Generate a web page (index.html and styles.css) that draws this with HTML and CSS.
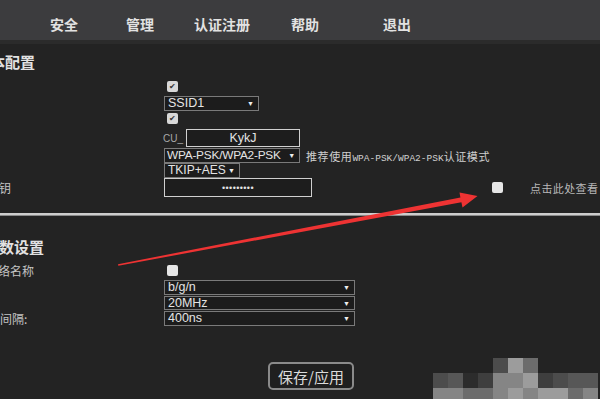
FILE: index.html
```html
<html>
<head>
  <title>WLAN</title>
  <link rel="stylesheet" href="styles.css">
</head>
<body>
  <div class="nav">
    <span>安全</span>
    <span>管理</span>
    <span>认证注册</span>
    <span>帮助</span>
    <span>退出</span>
  </div>

  <div class="main">
    <div class="title title-basic">基本配置</div>

    <div class="row r1">
      <div class="label"></div>
      <span class="check on">&#10004;</span>
    </div>
    <div class="row r2">
      <div class="label"></div>
      <div class="select w-ssid"><span>SSID1</span><i>&#9660;</i></div>
    </div>
    <div class="row r3">
      <div class="label"></div>
      <span class="check on">&#10004;</span>
    </div>
    <div class="row r4">
      <div class="label"></div>
      <span class="prefix">CU_</span>
      <div class="field w-name">KykJ</div>
    </div>
    <div class="row r5">
      <div class="label"></div>
      <div class="select w-auth"><span>WPA-PSK/WPA2-PSK</span><i>&#9660;</i></div>
      <span class="hint">推荐使用<b>WPA-PSK/WPA2-PSK</b>认证模式</span>
    </div>
    <div class="row r6">
      <div class="label"></div>
      <div class="select w-enc"><span>TKIP+AES</span><i>&#9660;</i></div>
    </div>
    <div class="row r7">
      <div class="label cut-key">密钥</div>
      <div class="field w-pwd dots">•••••••••</div>
      <span class="check off show-box"></span>
      <span class="show-text">点击此处查看</span>
    </div>

    <div class="divider"></div>

    <div class="title title-adv">参数设置</div>

    <div class="row r8">
      <div class="label cut-ssid">网络名称</div>
      <span class="check off"></span>
    </div>
    <div class="row r9">
      <div class="label"></div>
      <div class="select w-wide"><span>b/g/n</span><i>&#9660;</i></div>
    </div>
    <div class="row r10">
      <div class="label"></div>
      <div class="select w-wide"><span>20MHz</span><i>&#9660;</i></div>
    </div>
    <div class="row r11">
      <div class="label cut-gi">保护间隔:</div>
      <div class="select w-wide"><span>400ns</span><i>&#9660;</i></div>
    </div>

    <div class="actions">
      <button class="save">保存/应用</button>
    </div>
  </div>

  <svg class="arrow" width="600" height="399" viewBox="0 0 600 399">
    <polygon points="118,264.2 460.4,197.6 459.5,192.5 477.5,196 462.5,207.5 461.4,202.2 118.3,265.8" fill="#ee3333"/>
  </svg>

  <div class="mosaic">
    <i></i><i></i><i></i><i></i><i class="m3"></i><i class="m7"></i><i class="m5"></i><i></i><i></i><i></i><i></i>
    <i class="m3"></i><i class="m4"></i><i class="m1"></i><i class="m2"></i><i class="m6"></i><i class="m6"></i><i class="m7"></i><i class="m2"></i><i class="m3"></i><i class="m4"></i><i class="m4"></i>
    <i class="m6"></i><i class="m6"></i><i class="m5"></i><i class="m5"></i><i class="m6"></i><i class="m7"></i><i class="m6"></i><i class="m7"></i><i class="m7"></i><i class="m5"></i><i class="m6"></i>
  </div>
</body>
</html>
```

FILE: styles.css
```css
body {
  margin: 0;
  background-color: #232323;
  color: #cfcfcf;
  font-family: "Liberation Sans", Arial, "Noto Sans CJK SC", sans-serif;
  overflow: hidden;
  position: relative;
  height: 399px;
}

.nav {
  height: 40px;
  background-color: #3c3c3e;
  border-bottom: 4px solid #2b2b2b;
  display: grid;
  grid-template-columns: 76px 76px 88px 78px 106px;
  padding-left: 26px;
  align-items: center;
  font-family: "Noto Sans CJK SC", sans-serif;
  font-weight: bold;
  font-size: 14px;
  color: #e2e2e2;
}

.nav span {
  text-align: center;
  padding-top: 8px;
}

.title {
  height: 20px;
  line-height: 20px;
  font-family: "Noto Sans CJK SC", sans-serif;
  font-weight: bold;
  font-size: 15px;
  color: #e2e2e2;
  white-space: nowrap;
}

.title-basic {
  margin-top: 8px;
  text-indent: -25px;
}

.title-adv {
  margin-top: 21px;
  text-indent: -16px;
}

.row {
  display: flex;
  align-items: center;
  white-space: nowrap;
}

.label {
  width: 164px;
  flex-shrink: 0;
  font-family: "Noto Sans CJK SC", sans-serif;
  font-size: 12px;
  color: #c4c4c4;
}

.cut-key { text-indent: -13px; }
.cut-ssid { text-indent: -14px; }
.cut-gi { text-indent: -24px; }

.r1 { margin-top: 7px; height: 15px; }
.r2 { margin-top: 2px; height: 15px; }
.r3 { height: 15px; }
.r4 { margin-top: 3px; height: 18px; }
.r5 { margin-top: 1px; height: 15px; }
.r6 { height: 15px; }
.r7 { height: 19px; }
.r8 { margin-top: 6px; height: 15px; }
.r9 { margin-top: 2px; height: 15px; }
.r10 { margin-top: 1px; height: 14px; }
.r11 { margin-top: 1px; height: 15px; }

.check {
  width: 11px;
  height: 11px;
  margin-left: 3px;
  border-radius: 2px;
  box-sizing: border-box;
  display: inline-flex;
  align-items: center;
  justify-content: center;
  font-size: 8px;
  line-height: 1;
  flex-shrink: 0;
}

.check.on {
  background-color: #d8d8d8;
  color: #333;
}

.check.off {
  background-color: #e6e6e6;
}

.select {
  height: 100%;
  box-sizing: border-box;
  border: 1px solid #7a7a7a;
  background-color: #1c1c1c;
  color: #e4e4e4;
  font-size: 12.5px;
  line-height: 13px;
  padding: 0 4px 0 3px;
  display: flex;
  align-items: center;
  justify-content: space-between;
  flex-shrink: 0;
  white-space: nowrap;
}

.select i {
  font-style: normal;
  font-size: 7px;
  color: #eee;
}

.w-ssid { width: 95px; }
.w-auth { width: 136px; font-size: 11.8px; letter-spacing: -0.2px; padding-left: 2px; }
.w-enc { width: 76px; font-size: 12px; }
.w-wide { width: 191px; }

.prefix {
  width: 22px;
  margin-left: -1px;
  font-size: 10px;
  color: #a8a8a8;
}

.field {
  height: 100%;
  box-sizing: border-box;
  border: 1px solid #d0d0d0;
  background-color: #1d1d1d;
  color: #e4e4e4;
  font-size: 12.5px;
  display: flex;
  align-items: center;
  justify-content: center;
  flex-shrink: 0;
}

.w-name { width: 114px; margin-left: 1px; }
.w-pwd { width: 148px; }

.dots {
  font-size: 9px;
  letter-spacing: 0.4px;
}

.hint {
  margin-left: 6px;
  font-family: "Noto Sans CJK SC", sans-serif;
  font-size: 11px;
  letter-spacing: 0.6px;
  color: #cfcfcf;
}

.hint b {
  font-family: "Liberation Mono", monospace;
  font-weight: normal;
  font-size: 9.5px;
  letter-spacing: 0;
}

.show-box {
  margin-left: 180px;
}

.show-text {
  margin-left: 27px;
  font-family: "Noto Sans CJK SC", sans-serif;
  font-size: 11px;
  letter-spacing: 0.4px;
  color: #b8b8b8;
}

.divider {
  margin-top: 16px;
  height: 2px;
  background-color: #cdcdcd;
  border-bottom: 1px solid #8a8a8a;
}

.actions {
  margin-top: 36px;
  padding-left: 268px;
}

.save {
  width: 86px;
  height: 28px;
  box-sizing: border-box;
  border: 2px solid #8a8a8a;
  border-radius: 5px;
  background-color: #1f1f1f;
  color: #dcdcdc;
  font-family: "Noto Sans CJK SC", sans-serif;
  font-size: 15px;
  padding: 0;
  line-height: 1;
}

.arrow {
  position: absolute;
  left: 0;
  top: 0;
  pointer-events: none;
}

.mosaic {
  position: absolute;
  left: 433px;
  top: 358px;
  display: grid;
  grid-template-columns: repeat(11, 15px);
  grid-auto-rows: 15px;
}

.mosaic i { display: block; }
.m1 { background-color: #2c2c2c; }
.m2 { background-color: #3e3e3e; }
.m3 { background-color: #4c4c4c; }
.m4 { background-color: #575757; }
.m5 { background-color: #6c6c6c; }
.m6 { background-color: #858585; }
.m7 { background-color: #9c9c9c; }
```
